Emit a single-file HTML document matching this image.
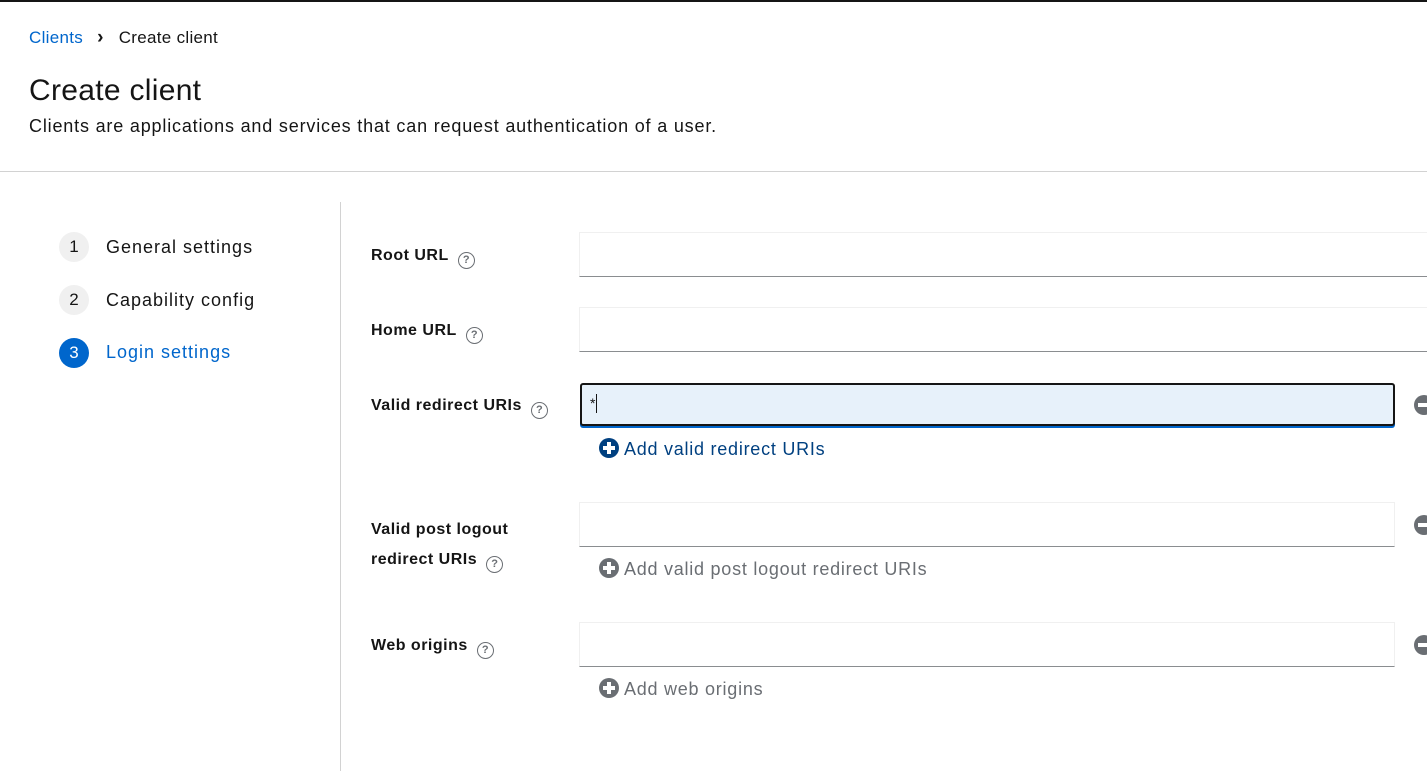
<!DOCTYPE html>
<html><head><style>
*{margin:0;padding:0;box-sizing:border-box}
body{width:1427px;height:771px;overflow:hidden;background:#fff;font-family:"Liberation Sans",sans-serif;color:#151515;position:relative}
.a{position:absolute;white-space:nowrap}
.inp{position:absolute;border:1px solid #f0f0f0;border-bottom:1px solid #8a8d90;background:#fff}
.lbl{font-size:16px;font-weight:bold;letter-spacing:0.5px}
.q{display:inline-block;width:17px;height:17px;border:1.5px solid #6a6e73;border-radius:50%;font-size:11px;font-weight:bold;color:#6a6e73;text-align:center;line-height:14px;vertical-align:-3px;margin-left:9px;letter-spacing:0}
.step{position:absolute;left:59px;width:30px;height:30px;border-radius:50%;background:#f0f0f0;font-size:17px;text-align:center;line-height:30px;color:#151515}
.nav{font-size:18px;letter-spacing:1px}
.plus{display:inline-block;width:20px;height:20px;border-radius:50%;position:relative;vertical-align:-3px;margin-right:5px}
.plus:before{content:"";position:absolute;left:4px;top:8px;width:12px;height:4px;background:#fff}
.plus:after{content:"";position:absolute;left:8px;top:4px;width:4px;height:12px;background:#fff}
.add{font-size:18px;letter-spacing:0.75px}
.minus{position:absolute;left:1414px;width:20px;height:20px;border-radius:50%;background:#6a6e73}
.minus:before{content:"";position:absolute;left:4px;top:8px;width:12px;height:4px;background:#fff}
</style></head><body>
<div class="a" style="left:0;top:0;width:1427px;height:2px;background:#151515"></div>
<div class="a" style="left:29px;top:28px;font-size:17px;letter-spacing:0.3px"><span style="color:#0066cc">Clients</span><span style="display:inline-block;margin:0 15px 0 14px;font-weight:bold;font-size:19px;line-height:17px">›</span>Create client</div>
<div class="a" style="left:29px;top:74px;font-size:30px;letter-spacing:0.3px">Create client</div>
<div class="a" style="left:29px;top:116px;font-size:18px;letter-spacing:0.82px">Clients are applications and services that can request authentication of a user.</div>
<div class="a" style="left:0;top:171px;width:1427px;height:1px;background:#d2d2d2"></div>
<div class="a" style="left:340px;top:202px;width:1px;height:569px;background:#d2d2d2"></div>
<div class="step" style="top:232px">1</div><div class="a nav" style="left:106px;top:237px">General settings</div>
<div class="step" style="top:285px">2</div><div class="a nav" style="left:106px;top:290px">Capability config</div>
<div class="step" style="top:338px;background:#0066cc;color:#fff">3</div><div class="a nav" style="left:106px;top:342px;color:#0066cc">Login settings</div>

<div class="a lbl" style="left:371px;top:247px">Root URL<span class="q">?</span></div>
<div class="inp" style="left:579px;top:232px;width:860px;height:45px"></div>
<div class="a lbl" style="left:371px;top:322px">Home URL<span class="q">?</span></div>
<div class="inp" style="left:579px;top:307px;width:860px;height:45px"></div>

<div class="a lbl" style="left:371px;top:397px">Valid redirect URIs<span class="q">?</span></div>
<div class="a" style="left:580px;top:383px;width:815px;height:43px;background:#e7f1fa;border:2px solid #151515;border-radius:3px;box-shadow:0 2px 0 #0066cc"></div>
<div class="a" style="left:590px;top:394px;font-size:14px">*<span style="display:inline-block;width:1px;height:19px;background:#151515;vertical-align:-5px;margin-left:1px"></span></div>
<div class="minus" style="top:395px"></div>
<div class="a add" style="left:599px;top:438px;color:#004080"><span class="plus" style="background:#004080"></span>Add valid redirect URIs</div>

<div class="a lbl" style="left:371px;top:515px;line-height:30px">Valid post logout<br>redirect URIs<span class="q">?</span></div>
<div class="inp" style="left:579px;top:502px;width:816px;height:45px"></div>
<div class="minus" style="top:515px"></div>
<div class="a add" style="left:599px;top:558px;color:#6a6e73"><span class="plus" style="background:#6a6e73"></span>Add valid post logout redirect URIs</div>

<div class="a lbl" style="left:371px;top:637px">Web origins<span class="q">?</span></div>
<div class="inp" style="left:579px;top:622px;width:816px;height:45px"></div>
<div class="minus" style="top:635px"></div>
<div class="a add" style="left:599px;top:678px;color:#6a6e73"><span class="plus" style="background:#6a6e73"></span>Add web origins</div>
</body></html>
